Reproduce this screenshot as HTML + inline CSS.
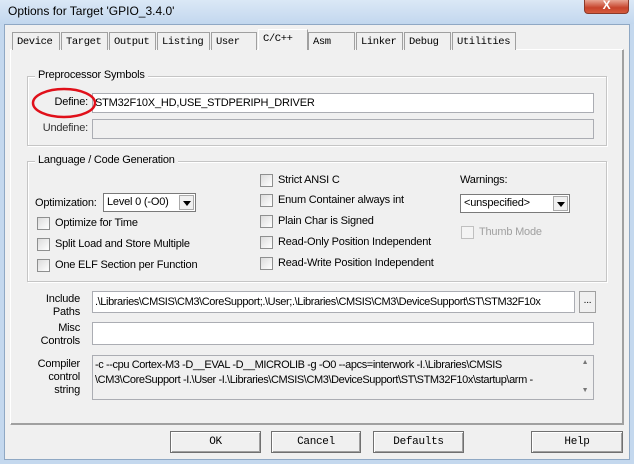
<!DOCTYPE html>
<html><head><meta charset="utf-8"><style>
*{box-sizing:border-box;margin:0;padding:0}
body{width:634px;height:464px;overflow:hidden;background:#c4d8ee;font-family:"Liberation Sans",sans-serif;font-size:11px;letter-spacing:-0.2px;color:#000;position:relative}
.a{position:absolute;white-space:nowrap}
.tb{left:0;top:0;width:634px;height:24px;background:linear-gradient(#dbe8f6,#c2d7ee)}
.client{left:4px;top:24px;width:626px;height:436px;background:#f0f0f0;border:1px solid #8fa8c4}
.tab{position:absolute;top:32px;height:18px;background:#f0f0f0;border:1px solid #a0a0a0;border-bottom:none;font-family:"Liberation Mono",monospace;font-size:10.5px;letter-spacing:-0.4px;padding:3px 0 0 4px;white-space:nowrap;overflow:hidden}
.panel{left:10px;top:49px;width:614px;height:376px;border:1px solid #a0a0a0;border-top-color:#fff;border-left-color:#fff;box-shadow:inset -1px -1px 0 #a0a0a0;background:#f0f0f0}
.grp{border:1px solid #c5c5c5;box-shadow:1px 1px 0 #fff, inset 1px 1px 0 #fff}
.gl{background:#f0f0f0;padding:0 3px}
.inp{background:#fff;border:1px solid #abadb3;padding:2px 2px;white-space:nowrap;overflow:hidden}
.cb{width:13px;height:13px;border:1px solid #8e8f8f;background:linear-gradient(135deg,#dcdcdc,#fff)}
.btn{top:431px;height:22px;border:1px solid #707070;background:#f0f0f0;box-shadow:inset 1px 1px 0 #fff,inset -1px -1px 0 #a0a0a0;font-family:"Liberation Mono",monospace;font-size:11px;letter-spacing:-0.3px;text-align:center;line-height:20px}
.lbl{text-align:right;line-height:13px}
.sel{background:#fff;border:1px solid #7a7a7a;padding:2px 3px}
.arr{position:absolute;right:1px;top:1px;width:15px;height:15px;background:#f0f0f0;border:1px solid #aaa}
.arr:after{content:"";position:absolute;left:3px;top:5px;border:4px solid transparent;border-top:5px solid #000}
</style></head><body>
<div class="a tb"></div>
<div class="a" style="left:8px;top:4px;font-size:12px;letter-spacing:0">Options for Target 'GPIO_3.4.0'</div>
<div class="a" style="left:584px;top:0;width:45px;height:14px;background:linear-gradient(#e8a593,#c7432b 60%,#d55b3e);border:1px solid #8a3a2a;border-top:none;border-radius:0 0 4px 4px;color:#fff;text-align:center;font-weight:bold;font-size:12px;line-height:11px">X</div>
<div class="a client"></div>
<div class="a panel"></div>
<div class="tab" style="left:12px;width:48px">Device</div>
<div class="tab" style="left:61px;width:47px">Target</div>
<div class="tab" style="left:109px;width:47px">Output</div>
<div class="tab" style="left:157px;width:53px">Listing</div>
<div class="tab" style="left:211px;width:46px">User</div>
<div class="tab" style="left:258px;top:29px;height:21px;width:50px;border-color:#fff #a0a0a0 #f0f0f0 #fff">C/C++</div>
<div class="tab" style="left:308px;width:47px">Asm</div>
<div class="tab" style="left:356px;width:47px">Linker</div>
<div class="tab" style="left:404px;width:47px">Debug</div>
<div class="tab" style="left:452px;width:64px">Utilities</div>

<div class="a grp" style="left:27px;top:76px;width:580px;height:70px"></div>
<div class="a gl" style="left:35px;top:69px">Preprocessor Symbols</div>
<div class="a lbl" style="left:40px;top:96px;width:48px">Define:</div>
<div class="a inp" style="left:92px;top:93px;width:502px;height:20px;padding-top:3px">STM32F10X_HD,USE_STDPERIPH_DRIVER</div>
<div class="a lbl" style="left:30px;top:122px;width:58px;color:#333">Undefine:</div>
<div class="a" style="left:92px;top:119px;width:502px;height:20px;border:1px solid #abadb3;background:#f0f0f0"></div>
<svg class="a" style="left:30px;top:86px" width="70" height="34"><ellipse cx="34" cy="17" rx="31" ry="14" fill="none" stroke="#e0101a" stroke-width="2.5"/></svg>

<div class="a grp" style="left:27px;top:161px;width:580px;height:121px"></div>
<div class="a gl" style="left:35px;top:154px">Language / Code Generation</div>
<div class="a" style="left:35px;top:197px">Optimization:</div>
<div class="a sel" style="left:103px;top:193px;width:93px;height:19px;position:absolute">Level 0 (-O0)<div class="arr"></div></div>
<div class="a cb" style="left:37px;top:217px"></div><div class="a" style="left:55px;top:217px">Optimize for Time</div>
<div class="a cb" style="left:37px;top:238px"></div><div class="a" style="left:55px;top:238px">Split Load and Store Multiple</div>
<div class="a cb" style="left:37px;top:259px"></div><div class="a" style="left:55px;top:259px">One ELF Section per Function</div>
<div class="a cb" style="left:260px;top:174px"></div><div class="a" style="left:278px;top:174px">Strict ANSI C</div>
<div class="a cb" style="left:260px;top:194px"></div><div class="a" style="left:278px;top:194px">Enum Container always int</div>
<div class="a cb" style="left:260px;top:215px"></div><div class="a" style="left:278px;top:215px">Plain Char is Signed</div>
<div class="a cb" style="left:260px;top:236px"></div><div class="a" style="left:278px;top:236px">Read-Only Position Independent</div>
<div class="a cb" style="left:260px;top:257px"></div><div class="a" style="left:278px;top:257px">Read-Write Position Independent</div>
<div class="a" style="left:460px;top:174px">Warnings:</div>
<div class="a sel" style="left:460px;top:194px;width:110px;height:19px;position:absolute">&lt;unspecified&gt;<div class="arr"></div></div>
<div class="a cb" style="left:461px;top:226px;border-color:#c0c0c0;background:#f4f4f4"></div><div class="a" style="left:479px;top:226px;color:#a0a0a0">Thumb Mode</div>

<div class="a lbl" style="left:30px;top:293px;width:50px">Include<br>Paths</div>
<div class="a inp" style="left:92px;top:291px;width:483px;height:22px;padding-top:4px;letter-spacing:-0.4px">.\Libraries\CMSIS\CM3\CoreSupport;.\User;.\Libraries\CMSIS\CM3\DeviceSupport\ST\STM32F10x</div>
<div class="a" style="left:579px;top:291px;width:17px;height:22px;border:1px solid #a0a0a0;background:#f0f0f0;text-align:center;font-size:10px;line-height:18px">...</div>
<div class="a lbl" style="left:30px;top:322px;width:50px">Misc<br>Controls</div>
<div class="a inp" style="left:92px;top:322px;width:502px;height:23px"></div>
<div class="a lbl" style="left:30px;top:358px;width:50px">Compiler<br>control<br>string</div>
<div class="a" style="left:92px;top:355px;width:502px;height:45px;border:1px solid #abadb3;background:#f0f0f0;line-height:15px;padding:2px 2px;white-space:nowrap;overflow:hidden;letter-spacing:-0.4px">-c --cpu Cortex-M3 -D__EVAL -D__MICROLIB -g -O0 --apcs=interwork -I.\Libraries\CMSIS<br>\CM3\CoreSupport -I.\User -I.\Libraries\CMSIS\CM3\DeviceSupport\ST\STM32F10x\startup\arm -</div>
<div class="a" style="left:577px;top:356px;width:16px;height:43px;background:#f0f0f0;font-size:7px;color:#777;text-align:center;line-height:14px">▲<br><br>▼</div>

<div class="a btn" style="left:170px;width:91px">OK</div>
<div class="a btn" style="left:271px;width:90px">Cancel</div>
<div class="a btn" style="left:373px;width:91px">Defaults</div>
<div class="a btn" style="left:531px;width:92px">Help</div>
</body></html>
